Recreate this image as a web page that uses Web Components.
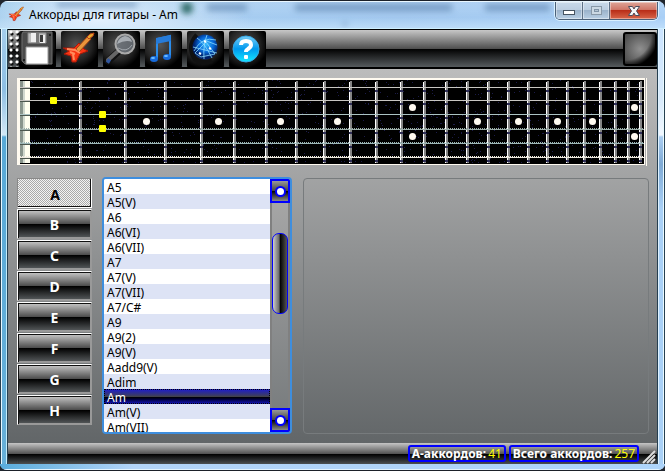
<!DOCTYPE html>
<html lang="ru">
<head>
<meta charset="utf-8">
<title>Аккорды для гитары - Am</title>
<style>
html,body{margin:0;height:100%;overflow:hidden;background:#20262e}
body{font-family:"Noto Sans","Open Sans",sans-serif;font-size:12px;color:#000}
</style>
</head>
<body>
<app-window>
  <title-bar slot="title">Аккорды для гитары - Am</title-bar>
  <tool-bar></tool-bar>
  <chord-workspace>
    <fret-board slot="board"></fret-board>
    <note-keys slot="keys" selected="A"></note-keys>
    <chord-list slot="list" selected="Am"></chord-list>
  </chord-workspace>
  <status-bar>
    <status-count value="41">А-аккордов:</status-count>
    <status-count value="257">Всего аккордов:</status-count>
  </status-bar>
</app-window>
<script>
const define=(name,html,init)=>customElements.define(name,class extends HTMLElement{
  constructor(){super();this.attachShadow({mode:'open'});}
  connectedCallback(){
    if(this.shadowRoot.childNodes.length)return;
    const t=document.createElement('template');
    t.innerHTML='<style>:host,*{box-sizing:border-box}</style>'+(typeof html==='function'?html(this):html);
    this.shadowRoot.append(t.content.cloneNode(true));
    if(init)init(this.shadowRoot,this);
  }
});

define('app-window',`<style>
:host{display:flex;flex-direction:column;height:100vh;border:1px solid #1b2029;border-width:1px 0;border-radius:8px 8px 7px 7px;overflow:hidden;
 background:linear-gradient(90deg,#8fc3ea 0,#a9d0f3 10%,#a3c9ef 60%,#a9cff6 100%)}
.title{flex:none}
.body{flex:1;min-height:0;display:grid;grid-template:minmax(0,1fr)/8px minmax(0,1fr) 8px;padding-bottom:5px;border-bottom:1px solid #e3f4ff;background:linear-gradient(90deg,#58acdc,#b2d4f8 20%,#add4fa)}
.side{border:1px solid #263f50;border-width:0 1px}
.left{box-shadow:inset 1px 0 #e8f7ff,inset -1px 0 #c5edfb;background:linear-gradient(#a5cdec,#8dbee3 60px,#d3e8f6 106px,#58a9d7 108px,#67b0d9)}
.right{box-shadow:inset 1px 0 #dff2ff,inset -1px 0 #eafaff;background:linear-gradient(#cbe4ff,#d8eafb 70px,#f2f8ff 106px,#aacdf1 108px,#7faad5 135px,#a9d0f6 180px)}
.client{display:flex;flex-direction:column;min-width:0;min-height:0;border-top:1px solid #000}
</style><div class="title"><slot name="title"></slot></div><div class="body"><i class="side left"></i><div class="client"><slot></slot></div><i class="side right"></i></div>`);

const guitar='<path d="M2 17 13 17 18 12 23 18 27 20 19 23 15 31 11 31 10 25 3 23 8 20Z" fill="#f73513" stroke="#a51808"/><path d="m15 18 12-13 3 3-12 13Z" fill="#e9953b" stroke="#9c4114"/><path d="m26 6 3-3 4-1-1 3-4 3Z" fill="#e7a82d" stroke="#b6421b"/><path d="M6 18 14 19 19 22M12 23 13 29M9 21 14 23" fill="none" stroke="#ff8a5c" stroke-width="2"/>';

define('title-bar',`<style>
:host{position:relative;display:flex;height:28px;overflow:hidden;border-top:1px solid #eaf7ff;border-bottom:1px solid #cdefff;background:linear-gradient(#ffffff22,#ffffff00 60%,#d0eaff88)}
.glow{position:absolute;inset:0;background:radial-gradient(ellipse 150px 34px at 100px 18px,#eaf5ffdd,#d4e7f788 60%,#d4e7f700)}
.mist{position:absolute;inset:0;width:100%;height:100%}
.logo{width:16px;height:16px;margin:4px 5px 0 8px;position:relative;flex:none}
h1{position:relative;margin:0;font-size:12px;line-height:25px;font-weight:400;flex:1;white-space:nowrap}
.ctl{position:relative;display:flex;height:18px;margin-right:7px;border:1px solid #4a6078;border-top:0;border-radius:0 0 5px 5px;overflow:hidden;box-shadow:0 0 0 1px #d9f0ff;flex:none}
button{width:27px;border:0;border-right:1px solid #5e7186;padding:0;background:linear-gradient(#c9daea,#bbcde0 46%,#9bb3cb 50%,#b9cfe4);box-shadow:inset 0 0 0 1px #ffffff66;display:grid;place-items:center}
.close{width:47px;border-right:0;background:linear-gradient(#dea598,#cf7768 44%,#b92e18 50%,#d86649)}
svg{display:block}
</style><div class="glow"></div><svg class="mist" aria-hidden="true"><defs><filter id="b"><feGaussianBlur stdDeviation="3"/></filter></defs><g filter="url(#b)"><g fill="#5479a5" opacity=".6"><rect x="295" y="2" width="157" height="7"/><rect x="485" y="2" width="65" height="7"/><rect x="207" y="2" width="40" height="7"/><rect x="57" y="0" width="80" height="5"/></g><circle cx="187" cy="6" r="6" fill="#2e6b67"/><circle cx="345" cy="22" r="2" fill="#6487b0"/></g></svg>
<svg class="logo" viewBox="0 0 34 34">${guitar}</svg><h1><slot></slot></h1>
<div class="ctl"><button aria-label="Свернуть"><svg width="14" height="12"><rect x="1.500" y="5.500" width="11" height="4" fill="#fff" stroke="#465361"/></svg></button><button aria-label="Развернуть"><svg width="13" height="12"><rect x="1.500" y="1.500" width="10" height="8" fill="#ccd9e4" stroke="#8999a8"/><rect x="4.500" y="4.500" width="4" height="2" fill="#b4c5d3" stroke="#8194a7"/></svg></button><button class="close" aria-label="Закрыть"><svg width="14" height="12"><path d="M1.500 1.500h4L7 4l1.500-2.500h4L9.500 6l3 4.500h-4L7 8l-1.500 2.500h-4L4.500 6Z" fill="#f6f6f6" stroke="#4c4c5b"/></svg></button></div>`);

const icons=[
['Сохранить','<path d="M4 1H33V33H6L3 30V3Z" fill="#4a4a4a" stroke="#6c6c6c"/><path d="M9 2H27V12H9Z" fill="#bdbdbd" stroke="#888"/><path d="M12 2H17V11H12ZM21 4H26V12H21Z" fill="#eee"/><path d="M17 2H20V12H17Z" fill="#777"/><path d="M21 4H24V11H21Z" fill="#3a3a3a"/><path d="M7 16H29V33H7Z" fill="#fff" stroke="#999"/><circle cx="31" cy="4" r="1" fill="#111"/><circle cx="5" cy="29" r="1" fill="#111"/>'],
['Гитара',guitar],
['Найти','<path d="M15 21 5 30" stroke="#111" stroke-width="7" stroke-linecap="round"/><path d="M15 20 5 29" stroke="#666" stroke-width="4" stroke-linecap="round"/><path d="m4 29 3 2" stroke="#3157a0" stroke-width="4"/><circle cx="22" cy="13" r="9.500" fill="#747b83" fill-opacity=".75" stroke="#aaa" stroke-width="2"/><path d="M14 13Q16 6 22 5Q28 6 29 11Q23 8 14 13" fill="#c3c9cf" opacity=".7"/><path d="M15 17Q24 22 29 14" stroke="#dae0e5" fill="none" opacity=".5"/>'],
['Музыка','<path d="M12 28V8L25 5V26" fill="none" stroke="#2a8dec" stroke-width="2"/><path d="M11 7 26 4V10L11 13Z" fill="#267bd9"/><ellipse cx="9" cy="28" rx="4" ry="3" fill="#176bdc"/><ellipse cx="22" cy="26" rx="4" ry="3" fill="#176bdc"/><ellipse cx="8" cy="27" rx="2" ry="1" fill="#70bfff"/><ellipse cx="21" cy="25" rx="2" ry="1" fill="#70bfff"/>'],
['Интернет','<defs><radialGradient id="g" cx="55%" cy="40%"><stop stop-color="#38bbff"/><stop offset=".6" stop-color="#0567d7"/><stop offset="1" stop-color="#001f67"/></radialGradient></defs><path d="M10 4Q0 15 8 28Q15 34 25 30" stroke="#111" stroke-width="5" fill="none"/><circle cx="18" cy="16" r="12.500" fill="url(#g)"/><path d="M7 20Q15 5 29 9M10 7Q17 11 25 27M20 4Q16 14 17 28M6 16 30 22M17 9 30 14M8 22 19 11 28 23 14 26Z" fill="none" stroke="#8bdcff" stroke-width=".8"/><path d="m17 10 2 1M22 17l2 1M12 22l2 1" stroke="#fff" stroke-width="2"/>'],
['Справка','<defs><linearGradient id="h" x2="0" y2="1"><stop stop-color="#78cef8"/><stop offset=".5" stop-color="#0099ee"/><stop offset="1" stop-color="#14eaff"/></linearGradient></defs><circle cx="17" cy="18" r="13" fill="url(#h)" stroke="#36a9e7"/><path d="M12 14Q12 10 17 10Q22 10 22 14Q22 16 19 18Q17 19 17 21" fill="none" stroke="#fff" stroke-width="4"/><rect x="15" y="24" width="4" height="4" rx="1" fill="#fff"/>']];
define('tool-bar',`<style>
:host{display:flex;height:39px;flex:none;border-bottom:2px solid #000;background:linear-gradient(#c8c8c8,#505050 50%,#000 51%,#565b5e)}
.grip{width:11px;background:radial-gradient(circle at 3px 2px,#fff 1px,#0000 2px) 0 0/6px 6px,radial-gradient(circle at 4px 4px,#111 1px,#0000 2px) 0 0/6px 6px}
.tools{display:flex;gap:5px;flex:1;padding-top:1px}
button{display:block;width:37px;height:37px;padding:0;border:0;border-radius:2px;background:radial-gradient(circle at 42% 38%,#555,#232323 50%,#000 75%)}
.tools button{border-right:1px solid #000}
svg{display:block;width:37px;height:37px}
.end{width:34px;height:34px;margin:2px 0 0;border:2px solid #000;border-radius:3px;background:radial-gradient(circle at 0 0,#0000 26px,#000 34px),radial-gradient(circle at 50% 50%,#909090,#444)}
</style><span class="grip"></span><div class="tools">${icons.map(([n,s])=>`<button aria-label="${n}"><svg viewBox="0 0 37 37">${s}</svg></button>`).join('')}</div><button class="end" aria-label="Дополнительно"></button>`);

define('chord-workspace',`<style>
:host{display:flex;flex-direction:column;flex:1;min-height:0;padding:9px 8px 9px 9px;gap:12px;background:linear-gradient(#bcbcbc,#626668)}
.board{padding-right:2px}
.cols{display:grid;grid-template:minmax(0,1fr)/75px 190px 1fr;gap:10px;flex:1;min-height:0}
.cols>*{min-height:0}
.panel{border:1px solid #777b7d;border-radius:4px;margin-left:1px}
</style><div class="board"><slot name="board"></slot></div><div class="cols"><slot name="keys"></slot><slot name="list"></slot><section class="panel" aria-label="Аккорд"></section></div>`);

define('fret-board',()=>{
  const frets=[79,124,164,200,233,265,295,323,349,375,400,423,445,466,487,507,527,546,566,583,599,614,627,639];
  const strings=[[87,'#c8c6c2'],[100,'#c8c6c2'],[114,'#abc3c3'],[129,'#9db0ab'],[143,'#9db7b7'],[157,'#eeeae0']];
  let seed=7,noise='';
  const rnd=n=>(seed=(seed*1103515245+12345)%2147483648,Math.floor(seed/2147483648*n));
  for(let i=0;i<900;i++)noise+=`M${30+rnd(612)} ${80+rnd(83)}h1v1h-1z`;
  const dots=[[146,121],[218,121],[280,121],[337,121],[412,107],[412,136],[477,121],[518,121],[557,121],[592,121],[634,107],[634,136]];
  return `<style>:host{display:block}svg{display:block;width:100%;height:auto}</style>
<svg viewBox="17 78 630 88" role="img" aria-label="Гриф">
<rect x="17" y="78" width="629" height="87" fill="#fffaf0"/><rect x="20" y="80" width="624" height="84" fill="#000"/><rect x="645" y="78" width="1" height="88" fill="#aaa"/><rect x="646" y="78" width="1" height="88" fill="#fffaf0"/>
<path d="${noise}" fill="#1b1b48"/>
<rect x="20" y="81" width="10" height="82" fill="#fffff0"/><rect x="20" y="81" width="3" height="82" fill="#89958c"/><rect x="23" y="81" width="2" height="82" fill="#d0d8cd"/>
${frets.map(x=>`<rect x="${x}" y="82" width="1" height="81" fill="#fff"/><rect x="${x+1}" y="81" width="2" height="82" fill="#858585"/>${[90,103,117,132,146,160].map(y=>`<rect x="${x}" y="${y}" width="3" height="2" fill="#303058"/>`).join('')}`).join('')}
${strings.map(([y,c],i)=>`<rect x="20" y="${y}" width="624" height="1" fill="${c}"/>${i>2?`<path d="M20 ${y-.5}H644" stroke="${c}" stroke-dasharray="1 1"/>`:''}<rect x="20" y="${y+1}" width="10" height="1" fill="#4c574e"/>`).join('')}
${dots.map(([x,y])=>`<circle cx="${x+.5}" cy="${y+.5}" r="3.500" fill="#fffaf0"/>`).join('')}
${[[53,100],[102,114],[102,128]].map(([x,y])=>`<rect x="${x-3}" y="${y-3}" width="7" height="7" rx="1" fill="#ff0"/>`).join('')}
</svg>`;
});

define('note-keys',el=>`<style>
:host{display:flex;flex-direction:column;gap:1px}
button{height:30px;flex:none;border:1px solid;border-color:#fff #999 #999 #fff;padding:0;font:bold 14px "Noto Sans",sans-serif;color:#fff;background:linear-gradient(#c9c9c9,#4d4d4d 49%,#000 51%,#575b5d);box-shadow:inset 1px 1px #111,inset -1px -1px #999}
button[aria-pressed=true]{color:#000;border-color:#888 #fff #fff #888;box-shadow:inset -1px -1px #111;background:repeating-conic-gradient(#aaa 0 25%,#f4f4f4 0 50%) 0 0/2px 2px;padding:2px 0 0 1px}
</style>${[...'ABCDEFGH'].map(k=>`<button aria-pressed="${k===el.getAttribute('selected')}">${k}</button>`).join('')}`,
root=>root.addEventListener('click',e=>{const b=e.target.closest('button');if(b)root.querySelectorAll('button').forEach(k=>k.setAttribute('aria-pressed',k===b));}));

define('chord-list',el=>`<style>
:host{display:grid;grid-template:minmax(0,1fr)/1fr 20px;border:2px solid #3e8ede;border-radius:4px;margin-top:-1px;overflow:hidden;background:#fff}
select{display:block;width:100%;height:100%;min-height:0;border:0;border-radius:0;outline:0;padding:0;margin:0;font:12px "Noto Sans",sans-serif;color:#000;background:#fff;scrollbar-width:none;overflow-y:auto}
option{height:15px;min-height:15px;line-height:15px;padding:0 3px}
option:nth-child(even){background:#dde3f5}
option:checked{color:#fff;background:linear-gradient(#1c1cd0,#3c3c60 45%,#444 52%,#000 54%,#00003c 68%,#1818c0);outline:1px dotted #000;outline-offset:-1px}
.bar{display:flex;flex-direction:column;background:linear-gradient(90deg,#808080 2px,#a0a0a000 2px 18px,#808080 18px),linear-gradient(#aaa,#75797b)}
button{height:24px;flex:none;border:2px solid #00f;padding:0;background:linear-gradient(#999,#444 49%,#000 50%,#888);display:grid;place-items:center}
i{width:11px;height:11px;border:2px solid #00f;border-radius:50%;background:#fff}
.track{flex:1;padding:30px 2px 0}
.thumb{height:81px;border:1px solid #00f;border-radius:7px;background:linear-gradient(90deg,#ccc,#666 45%,#000 50%,#555)}
</style><select size="17" aria-label="Аккорды">${['A5','A5(V)','A6','A6(VI)','A6(VII)','A7','A7(V)','A7(VII)','A7/C#','A9','A9(2)','A9(V)','Aadd9(V)','Adim','Am','Am(V)','Am(VII)'].map(c=>`<option${c===el.getAttribute('selected')?' selected':''}>${c}</option>`).join('')}</select><div class="bar"><button aria-label="Вверх"><i></i></button><div class="track"><div class="thumb"></div></div><button aria-label="Вниз"><i></i></button></div>`,
root=>{const s=root.querySelector('select');s.scrollTop=0;root.querySelectorAll('button').forEach((b,i)=>b.onclick=()=>s.scrollBy(0,i?15:-15));});

define('status-bar',`<style>
:host{display:flex;justify-content:flex-end;height:21px;flex:none;gap:3px;padding:2px 1px 0 0;background:linear-gradient(#c5c5c5,#555 50%,#000 53%,#4c5052)}
svg{width:14px;height:19px;flex:none}
</style><slot></slot><svg viewBox="0 0 14 19" aria-hidden="true"><path d="M1 18 13 6M5 18l8-8M9 18l4-4" stroke="#ddd" stroke-width="2"/></svg>`);
define('status-count',el=>`<style>
:host{display:block;height:17px;border:2px solid #00f;border-radius:3px;padding:0 2px;font-size:12px;line-height:13px;color:#ff0;white-space:nowrap}
b{color:#fff}
span{margin-left:2px}
</style><b><slot></slot></b><span>${el.getAttribute('value')}</span>`);
</script>
</body>
</html>
